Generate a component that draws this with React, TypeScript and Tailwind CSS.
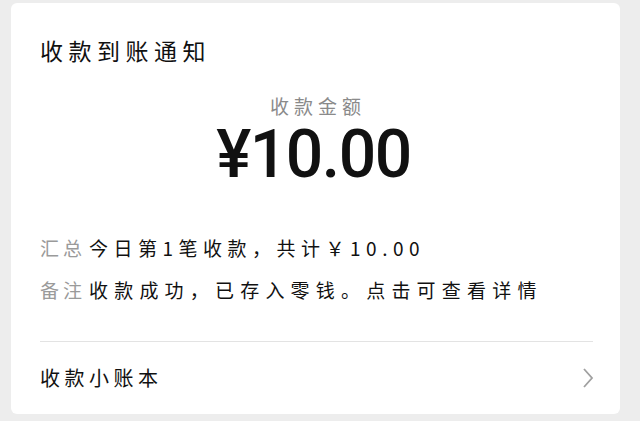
import React from "react";

export default function App() {
  const cjk = { fontFamily: '"Noto Sans CJK SC", "Noto Sans", sans-serif' };
  return (
    <div className="w-[640px] h-[421px] bg-[#ededed] pt-[3px] pl-[11px] pr-[20px] pb-[7px]" style={cjk}>
      <div className="bg-white rounded-[6px] h-full flex flex-col pl-[29px] pr-[27px]">
        <div className="pt-[33px] h-[28px] box-content text-[23px] leading-[28px] tracking-[5.5px] text-[#111]">
          收款到账通知
        </div>
        <div className="mt-[32px] flex flex-col items-center">
          <div className="text-[19px] leading-[20px] tracking-[5px] text-[#8a8a8a] pl-[3px]">收款金额</div>
          <div
            className="mt-[9px] text-[66px] leading-[60px] font-medium text-[#111] tracking-[-1.5px] -ml-[6px]"
            style={{ fontFamily: 'Roboto, "Liberation Sans", sans-serif' }}
          >
            ¥10.00
          </div>
        </div>
        <div className="mt-[51px] flex flex-col gap-[18px] text-[19px] leading-[24px] text-[#111]">
          <div className="flex tracking-[5.5px]">
            <span className="text-[#9a9a9a] mr-[3px] tracking-[4px]">汇总</span>
            <span>今日第1笔收款，共计￥10.00</span>
          </div>
          <div className="flex tracking-[6.2px]">
            <span className="text-[#9a9a9a] mr-[3px] tracking-[4px]">备注</span>
            <span>收款成功，已存入零钱。点击可查看详情</span>
          </div>
        </div>
        <div className="mt-[39px] h-px bg-[#e3e3e3]" />
        <div className="flex-1 flex items-center justify-between pb-[0px]">
          <span className="text-[20px] tracking-[4.5px] text-[#111]">收款小账本</span>
          <svg width="12" height="22" viewBox="0 0 12 22" className="mr-[-1px]">
            <path d="M2 2 L10 11 L2 20" fill="none" stroke="#a0a0a0" strokeWidth="1.8" />
          </svg>
        </div>
      </div>
    </div>
  );
}
